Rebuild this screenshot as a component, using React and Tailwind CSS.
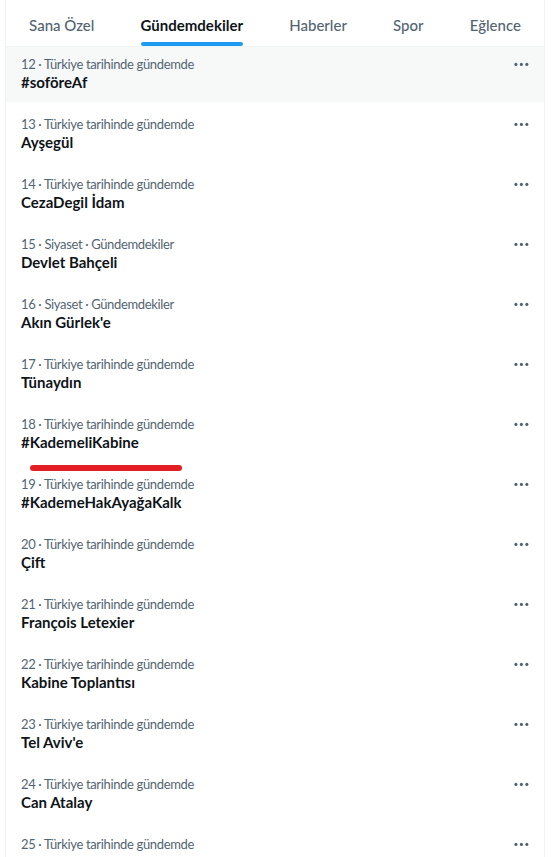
import React from 'react';

const tabs = ['Sana Özel', 'Gündemdekiler', 'Haberler', 'Spor', 'Eğlence'];

const trends = [
  { rank: 12, meta: 'Türkiye tarihinde gündemde', title: '#soföreAf' },
  { rank: 13, meta: 'Türkiye tarihinde gündemde', title: 'Ayşegül' },
  { rank: 14, meta: 'Türkiye tarihinde gündemde', title: 'CezaDegil İdam' },
  { rank: 15, meta: 'Siyaset · Gündemdekiler', title: 'Devlet Bahçeli' },
  { rank: 16, meta: 'Siyaset · Gündemdekiler', title: "Akın Gürlek'e" },
  { rank: 17, meta: 'Türkiye tarihinde gündemde', title: 'Tünaydın' },
  { rank: 18, meta: 'Türkiye tarihinde gündemde', title: '#KademeliKabine', marked: true },
  { rank: 19, meta: 'Türkiye tarihinde gündemde', title: '#KademeHakAyağaKalk' },
  { rank: 20, meta: 'Türkiye tarihinde gündemde', title: 'Çift' },
  { rank: 21, meta: 'Türkiye tarihinde gündemde', title: 'François Letexier' },
  { rank: 22, meta: 'Türkiye tarihinde gündemde', title: 'Kabine Toplantısı' },
  { rank: 23, meta: 'Türkiye tarihinde gündemde', title: "Tel Aviv'e" },
  { rank: 24, meta: 'Türkiye tarihinde gündemde', title: 'Can Atalay' },
  // last row is cut by the window, only its meta line shows
  { rank: 25, meta: 'Türkiye tarihinde gündemde', title: null },
];

function MoreIcon() {
  return (
    <svg viewBox="0 0 24 24" className="w-[18.75px] h-[18.75px] fill-[#536471]">
      <circle cx="5" cy="12" r="2" />
      <circle cx="12" cy="12" r="2" />
      <circle cx="19" cy="12" r="2" />
    </svg>
  );
}

function TrendRow({ trend, first }) {
  return (
    <div
      className={`relative flex justify-between pl-[15px] pr-[13px] pb-[10px] ${
        first ? 'pt-[9px] bg-[#f7f9f9]' : 'pt-[14px]'
      }`}
    >
      <div className="flex flex-col">
        <span className="text-[13px] leading-4 tracking-[-0.35px] text-[#536471]">
          {trend.rank} · {trend.meta}
        </span>
        {trend.title && (
          <span className="text-[15px] leading-5 font-bold text-[#0f1419]">{trend.title}</span>
        )}
      </div>
      <div className="-mt-[1px]">
        <MoreIcon />
      </div>
      {trend.marked && (
        <div className="absolute left-[24px] top-[63px] w-[152px] h-[6px] rounded-full bg-[#e31e24]" />
      )}
    </div>
  );
}

export default function App() {
  return (
    <div className="h-screen overflow-hidden bg-white" style={{ fontFamily: 'Lato, "Liberation Sans", sans-serif' }}>
      <div className="ml-[5px] w-[540px] border-x border-[#eff3f4]">
        <div className="flex h-[47px] border-b border-[#eff3f4]">
          {tabs.map((tab, i) => {
            const active = i === 1;
            return (
              <div key={tab} className="flex-auto flex justify-center px-4">
                <div className="relative flex items-center h-full pt-1">
                  <span
                    className={`text-[15px] ${
                      active ? 'font-bold text-[#0f1419]' : 'font-medium text-[#536471]'
                    }`}
                  >
                    {tab}
                  </span>
                  {active && (
                    <div className="absolute bottom-0 left-0 right-0 h-1 rounded-full bg-[#1d9bf0]" />
                  )}
                </div>
              </div>
            );
          })}
        </div>
        {trends.map((t, i) => (
          <TrendRow key={t.rank} trend={t} first={i === 0} />
        ))}
      </div>
    </div>
  );
}
